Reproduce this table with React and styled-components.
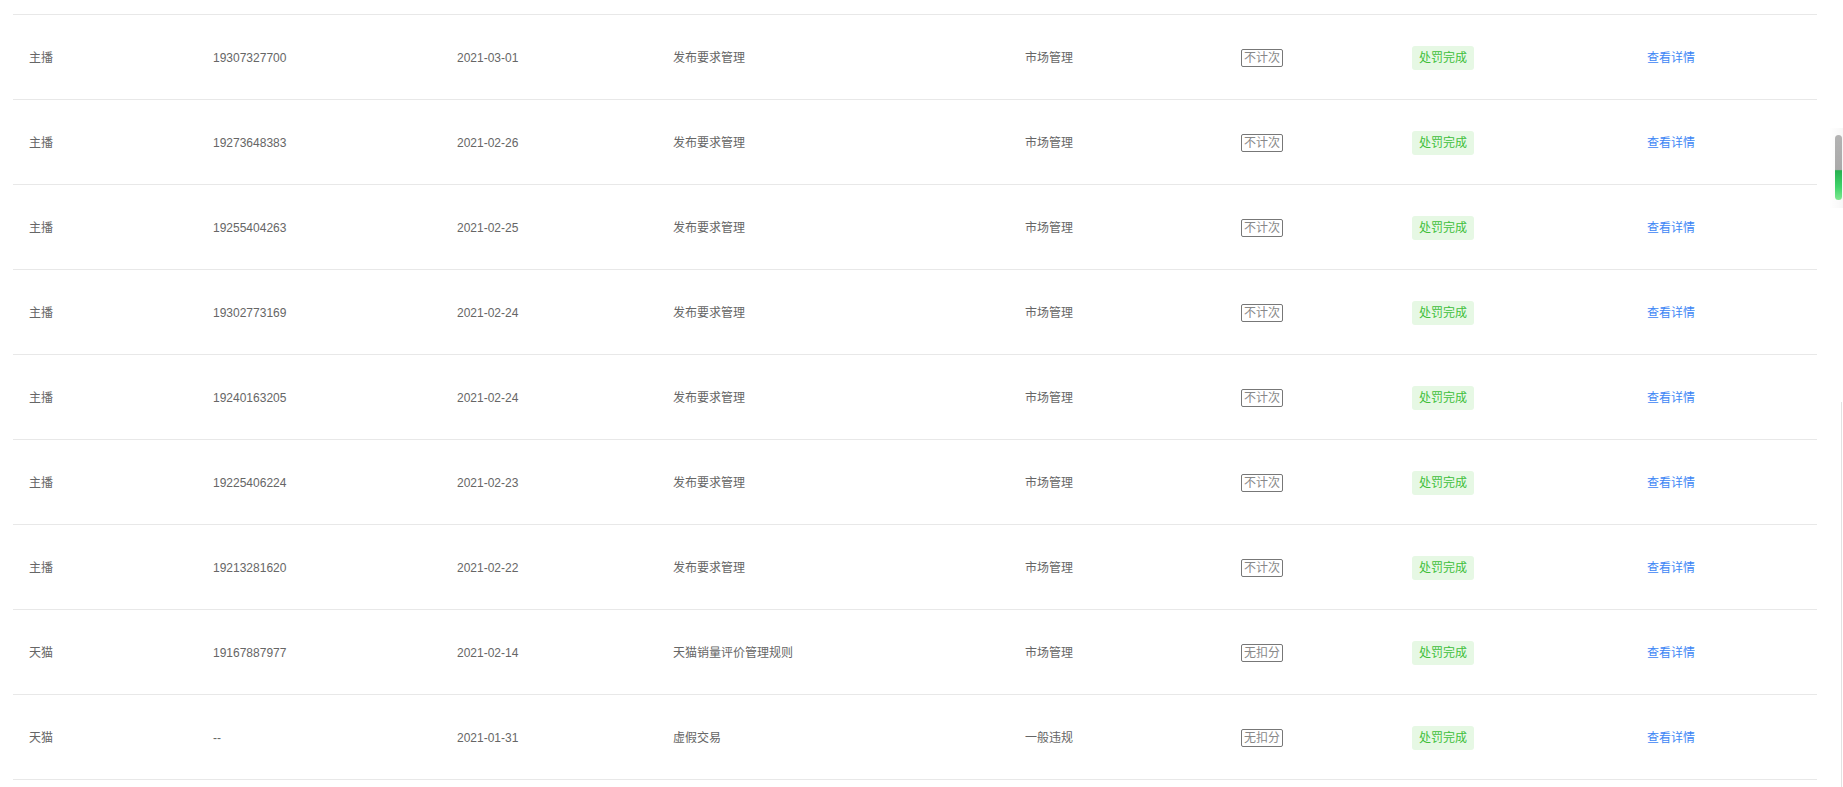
import React from 'react';
import styled, { createGlobalStyle } from 'styled-components';

const GlobalStyle = createGlobalStyle`
  html, body {
    margin: 0;
    padding: 0;
    background: #fff;
    overflow: hidden;
  }
  body {
    font-family: "Liberation Sans", Arial, "Noto Sans CJK SC", sans-serif;
  }
`;

const Page = styled.div`
  position: relative;
  width: 1843px;
  height: 787px;
  overflow: hidden;
  padding: 14px 26px 0 13px;
  box-sizing: border-box;
`;

const Table = styled.div`
  display: flex;
  flex-direction: column;
`;

const Row = styled.div`
  display: grid;
  grid-template-columns: 184px 244px 216px 352px 216px 171px 235px 186px;
  align-items: center;
  height: 85px;
  padding-top: 2px;
  box-sizing: border-box;
  border-top: 1px solid #e8e8e8;
`;

const Cell = styled.div`
  padding-left: 16px;
  font-size: 12px;
  line-height: 16px;
  color: #666;
  white-space: nowrap;
`;

const Outline = styled.span`
  display: inline-block;
  border: 1px solid #777;
  border-radius: 2px;
  padding: 0 2px;
  line-height: 16px;
  font-size: 12px;
  color: #888;
`;

const Status = styled.span`
  display: inline-block;
  background: #e6f8e4;
  color: #3ebf3b;
  border-radius: 3px;
  padding: 4px 7px;
  line-height: 16px;
  font-size: 12px;
`;

const Link = styled.a`
  color: #3d86f5;
  font-size: 12px;
  text-decoration: none;
  cursor: pointer;
`;

const ScrollTrack = styled.div`
  position: absolute;
  top: 128px;
  right: 0;
  width: 14px;
  height: 80px;
  background: linear-gradient(to right, rgba(0, 0, 0, 0), rgba(0, 0, 0, 0.03));
`;

const ScrollThumb = styled.div`
  position: absolute;
  top: 135px;
  right: 1px;
  width: 7px;
  height: 65px;
  border-radius: 4px;
  background: linear-gradient(
    to bottom,
    #b3b3b3 0%,
    #a9a9a9 53%,
    #27b04f 55%,
    #3fd36a 80%,
    #7fe890 100%
  );
`;

const EdgeLine = styled.div`
  position: absolute;
  top: 402px;
  right: 1px;
  width: 1px;
  bottom: 0;
  background: #e2e2e2;
`;

const rows = [
  ['主播', '19307327700', '2021-03-01', '发布要求管理', '市场管理', '不计次'],
  ['主播', '19273648383', '2021-02-26', '发布要求管理', '市场管理', '不计次'],
  ['主播', '19255404263', '2021-02-25', '发布要求管理', '市场管理', '不计次'],
  ['主播', '19302773169', '2021-02-24', '发布要求管理', '市场管理', '不计次'],
  ['主播', '19240163205', '2021-02-24', '发布要求管理', '市场管理', '不计次'],
  ['主播', '19225406224', '2021-02-23', '发布要求管理', '市场管理', '不计次'],
  ['主播', '19213281620', '2021-02-22', '发布要求管理', '市场管理', '不计次'],
  ['天猫', '19167887977', '2021-02-14', '天猫销量评价管理规则', '市场管理', '无扣分'],
  ['天猫', '--', '2021-01-31', '虚假交易', '一般违规', '无扣分'],
];

const App = () => {
  return (
    <>
      <GlobalStyle />
      <Page>
        <Table>
          {rows.map((r, i) => (
            <Row key={i}>
              <Cell>{r[0]}</Cell>
              <Cell>{r[1]}</Cell>
              <Cell>{r[2]}</Cell>
              <Cell>{r[3]}</Cell>
              <Cell>{r[4]}</Cell>
              <Cell>
                <Outline>{r[5]}</Outline>
              </Cell>
              <Cell>
                <Status>处罚完成</Status>
              </Cell>
              <Cell>
                <Link>查看详情</Link>
              </Cell>
            </Row>
          ))}
          <Row />
        </Table>
        <ScrollTrack />
        <ScrollThumb />
        <EdgeLine />
      </Page>
    </>
  );
};

export default App;
